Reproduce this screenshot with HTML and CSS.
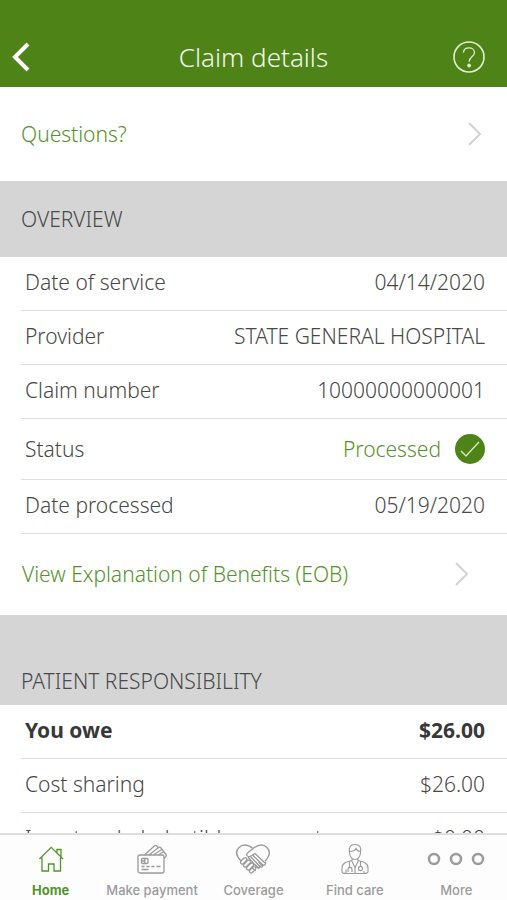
FILE: index.html
```
<!DOCTYPE html>
<html lang="en">
<head>
    <meta charset="UTF-8">
    <meta name="viewport" content="width=device-width, initial-scale=1.0">
    <title>Claim details</title>
    <link rel="stylesheet" href="styles.css">
</head>
<body>
    <header class="header">
        <button class="icon-btn" type="button" aria-label="Back">
            <svg width="18" height="30" viewBox="0 0 18 30" fill="none" stroke="#fff" stroke-width="4">
                <path d="M16 2 3 15l13 13"/>
            </svg>
        </button>
        <h1 class="title">Claim details</h1>
        <button class="icon-btn" type="button" aria-label="Help">
            <svg width="34" height="34" viewBox="0 0 34 34" fill="none" stroke="#e2f0cf">
                <circle cx="17" cy="17" r="15" stroke-width="1.6"/>
                <path d="M11.5 12.700c0-3 2.300-4.900 5.500-4.900s5.500 1.900 5.500 4.600c0 4.400-5.400 4.400-5.400 9.300" stroke-width="1.200"/>
                <circle cx="17.100" cy="25.500" r="1.500" fill="#e2f0cf" stroke-width="1"/>
            </svg>
        </button>
    </header>

    <main class="content">
        <a class="link-row" href="#questions">
            Questions?
            <svg class="chevron" width="16" height="26" viewBox="0 0 16 26"><path d="m2 2 11 11L2 24"/></svg>
        </a>

        <h2 class="section-title">OVERVIEW</h2>
        <dl class="details">
            <div class="row"><dt>Date of service</dt><dd>04/14/2020</dd></div>
            <div class="row"><dt>Provider</dt><dd>STATE GENERAL HOSPITAL</dd></div>
            <div class="row"><dt>Claim number</dt><dd>10000000000001</dd></div>
            <div class="row row-status">
                <dt>Status</dt>
                <dd class="processed">
                    Processed
                    <svg width="30" height="30" viewBox="0 0 30 30" fill="none">
                        <circle cx="15" cy="15" r="15" fill="#4e8318"/>
                        <path d="m6 17 5 5L24 8" stroke="#d3e6bb" stroke-width="1.5"/>
                    </svg>
                </dd>
            </div>
            <div class="row"><dt>Date processed</dt><dd>05/19/2020</dd></div>
        </dl>
        <a class="link-row link-eob" href="#eob">
            View Explanation of Benefits (EOB)
            <svg class="chevron" width="16" height="26" viewBox="0 0 16 26"><path d="m2 2 11 11L2 24"/></svg>
        </a>

        <h2 class="section-title section-tall">PATIENT RESPONSIBILITY</h2>
        <dl class="details">
            <div class="row row-total"><dt>You owe</dt><dd>$26.00</dd></div>
            <div class="row"><dt>Cost sharing</dt><dd>$26.00</dd></div>
            <div class="row"><dt>In network deductible payment</dt><dd>$0.00</dd></div>
        </dl>
    </main>

    <nav class="tab-bar">
        <a class="tab active" href="#home">
            <svg width="32" height="32" viewBox="0 0 32 32">
                <path d="m4.500 16 11.700-11.700L28 16M7 14.500V28h6.500v-7h5.500v7h6.500V14.500M22 9.500V6.500h4v7.500M21.500 6.500h5"/>
            </svg>
            Home
        </a>
        <a class="tab" href="#payment">
            <svg width="32" height="32" viewBox="0 0 32 32">
                <rect x="2" y="12" width="26" height="18" rx="2"/>
                <path d="M8.500 12 18.300 3c.8-.7 1.800-.7 2.500 0l2 2.200M13 12l9.500-7.500c.8-.6 1.800-.5 2.400.3L30 11.500c.6.800.5 1.600-.2 2.200L28 15M17.500 12l8-5.500M22.500 12l5-3.500"/>
                <rect x="5.500" y="15.500" width="6.500" height="5" rx="1"/>
                <path d="M8.800 15.500v5M5.500 18h3.300M5.500 23.500h3M10.500 23.500h3M15.500 23.500h3M20.500 23.500h4M5.500 26.500h7"/>
            </svg>
            Make payment
        </a>
        <a class="tab" href="#coverage">
            <svg width="36" height="32" viewBox="0 0 36 32">
                <path d="M6 18C1 13 .5 8 4 4.500 8 .7 13 1.500 18 5.500 23 1.500 28 .7 32 4.500c3.500 3.700 3 8.500-2 13.500"/>
                <path d="M18 5.500 12.500 10c-2 1.800.5 4.700 3 3.200L20 10.500 30 20M23.500 19l4 4M20 21.500l4.300 4.300M17 24.500l3.600 3.500"/>
                <path d="m17.500 12 9.800 9.500c2 1.600 4.500-.4 2.800-2.400M15.500 13.500l9.200 9.800c1.700 1.800 4.200-.2 2.600-2M13 14l8.500 9.700c1.800 2 4.500.4 3.200-1.500"/>
                <path d="m6 18 2.700-2.700c2-1.600 4.200.7 2.500 2.500L8.500 20.500c-2 1.500-4-.8-2.500-2.500zM9 21l3.500-3.500c2-1.500 4 .8 2.500 2.500l-3.500 3.500c-2 1.500-4-.8-2.500-2.500zM12 24l3.500-3.500c2-1.500 4 .8 2.500 2.500l-3.500 3.500c-2 1.500-4-.8-2.500-2.500zM15 27l3-3c2-1.300 3.700.8 2.300 2.500l-3 3c-1.900 1.400-3.800-.8-2.300-2.500z"/>
            </svg>
            Coverage
        </a>
        <a class="tab" href="#care">
            <svg class="fine" width="32" height="32" viewBox="0 0 32 32">
                <path d="M10.500 9.500C9.500 4 11.500 1.500 16 1.500S22.500 4 21.500 9.500c0 4-2.500 7-5.500 7s-5.500-3-5.500-7zM10.500 8.500c3 0 5.500-1 6.500-3 .8 1.800 2.500 3 4.500 3M13 15.500v3l3 6 3-6v-3"/>
                <path d="M13 17.500C7 19 3 20 3 25v3.500C3 30 5 30.500 7 30.500h18c2 0 4-.5 4-2V25c0-5-4-6-10-7.500M10.500 18.500v6M21.500 18.500v5M7 26.500v4M25 28v2.500"/>
                <path d="M9 29v-2c0-3.500 4-3.500 4 0v2M19.500 25.500c0-2.800 4-2.800 4 0s-4 2.800-4 0M16 24.500v6"/>
            </svg>
            Find care
        </a>
        <a class="tab" href="#more">
            <svg class="dots" width="58" height="32" viewBox="0 0 58 32">
                <circle cx="7" cy="16" r="5"/>
                <circle cx="29" cy="16" r="5"/>
                <circle cx="51" cy="16" r="5"/>
            </svg>
            More
        </a>
    </nav>
</body>
</html>
```
FILE: styles.css
```
:root {
    --green: #4e8318;
    --link: #55932a;
    --text: #484848;
    --gray: #d5d5d5;
    --line: #dedede;
    --muted: #9b9b9b;
}

* {
    margin: 0;
    padding: 0;
    box-sizing: border-box;
}

body {
    height: 100vh;
    display: flex;
    flex-direction: column;
    background: #fff;
    color: var(--text);
    font-family: "Noto Sans", sans-serif;
    font-size: 21px;
    font-weight: 350;
    line-height: 28px;
}

a {
    text-decoration: none;
}

svg {
    display: block;
    flex-shrink: 0;
}

.header {
    display: grid;
    grid-template-columns: 49px 1fr 40px;
    align-items: center;
    padding: 39px 21px 12px 12px;
    background: var(--green);
    color: #f1f8e8;
}

.title {
    font-size: 26px;
    font-weight: 350;
    line-height: 36px;
    text-align: center;
}

.icon-btn {
    display: flex;
    border: none;
    background: none;
    cursor: pointer;
}

.icon-btn:last-child {
    justify-content: flex-end;
}

.content {
    flex: 1;
    min-height: 0;
    overflow: auto;
    scrollbar-width: none;
}

.link-row {
    display: flex;
    align-items: center;
    justify-content: space-between;
    padding: 33px 24px 33px 21px;
    color: var(--link);
}

.link-eob {
    padding: 26px 37px 27px 22px;
}

.chevron {
    fill: none;
    stroke: #d3d3d3;
    stroke-width: 2;
}

.section-title {
    padding: 24px 21px;
    background: var(--gray);
    font-size: 21px;
    font-weight: 350;
}

.section-tall {
    padding: 52px 21px 10px;
}

.details {
    padding-left: 21px;
}

.row {
    display: flex;
    align-items: center;
    justify-content: space-between;
    padding: 11px 22px 14px 4px;
    border-bottom: 1px solid var(--line);
}

.row-status {
    padding: 15px 22px 15px 4px;
}

.processed {
    display: flex;
    align-items: center;
    gap: 14px;
    color: var(--link);
}

.row-total {
    color: #383838;
    font-weight: 700;
}

.tab-bar {
    display: grid;
    grid-template-columns: repeat(5, 1fr);
    padding-bottom: 2px;
    border-top: 2px solid var(--line);
    background: #fdfdfd;
}

.tab {
    display: flex;
    flex-direction: column;
    align-items: center;
    gap: 7px;
    padding-top: 8px;
    color: var(--muted);
    font-family: Inter, sans-serif;
    font-size: 13px;
    font-weight: 500;
    line-height: 16px;
    white-space: nowrap;
}

.tab svg {
    fill: none;
    stroke: currentColor;
    stroke-width: 1.3;
}

.tab .fine {
    stroke-width: 1.1;
}

.tab .dots {
    stroke-width: 2.5;
}

.tab.active {
    color: var(--link);
    font-weight: 700;
}
```
